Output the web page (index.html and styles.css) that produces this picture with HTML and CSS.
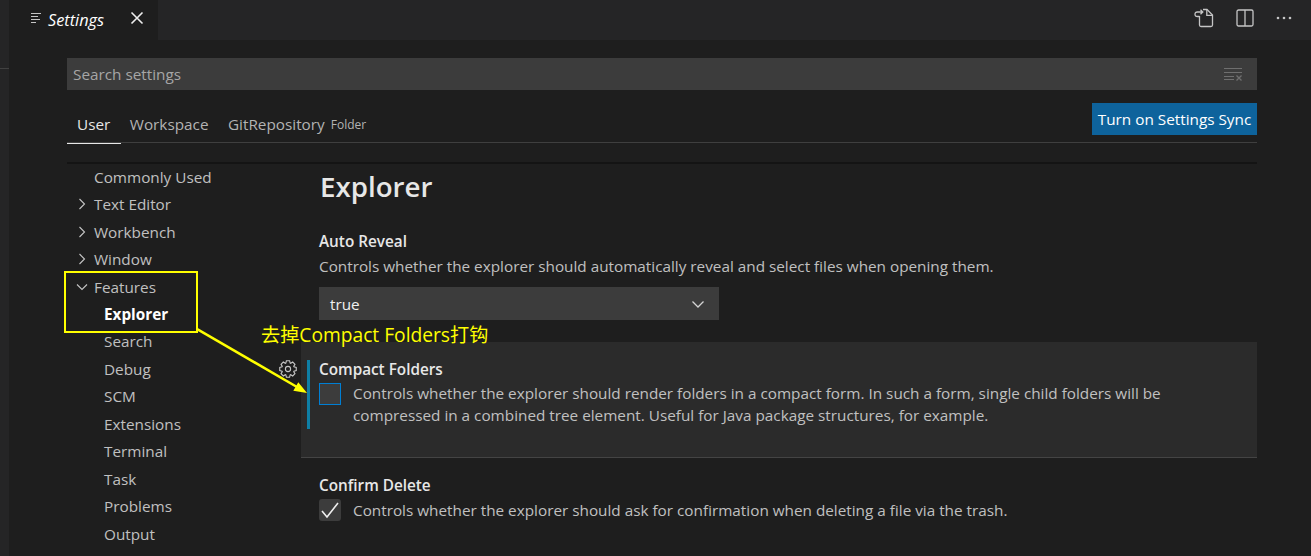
FILE: index.html
```html
<!DOCTYPE html>
<html lang="en">
<head>
    <meta charset="UTF-8">
    <title>Settings</title>
    <link rel="stylesheet" href="styles.css">
</head>
<body>
    <div class="sidebar-edge"><div class="sidebar-line"></div></div>

    <div class="editor">
        <div class="tabbar">
            <div class="tab">
                <svg class="tab-icon" width="12" height="12" viewBox="0 0 12 12" fill="none" stroke="#c5c5c5" stroke-width="1">
                    <path d="M1 1.500h10M1 4.500h7M1 7.500h9M1 10.500h5"/>
                </svg>
                <span class="tab-title">Settings</span>
                <svg class="tab-close" width="14" height="14" viewBox="0 0 14 14" fill="none" stroke="#eeeeee" stroke-width="1.600">
                    <path d="M1.500 1.500l11 11M12.500 1.500l-11 11"/>
                </svg>
            </div>
            <div class="actions">
                <svg width="20" height="20" viewBox="0 0 20 20" fill="none" stroke="#c5c5c5" stroke-width="1.300">
                    <path d="M5.500 8v9q0 1.500 1.500 1.500h10q1.500 0 1.500-1.500V7L13 1.500H9"/>
                    <path d="M12.800 1.500v5.800h5.700"/>
                    <path d="M5.500 8.500H3.500Q1 8.500 1 6.200T3.500 4H8.500M6.500 1.800L8.800 4 6.500 6.200"/>
                </svg>
                <svg width="18" height="18" viewBox="0 0 18 18" fill="none" stroke="#c5c5c5" stroke-width="1.300">
                    <rect x="1" y="1" width="16" height="16" rx="1.500"/>
                    <path d="M9 1v16"/>
                </svg>
                <svg width="16" height="16" viewBox="0 0 16 16" fill="#c5c5c5">
                    <circle cx="2" cy="8" r="1.300"/>
                    <circle cx="8" cy="8" r="1.300"/>
                    <circle cx="14" cy="8" r="1.300"/>
                </svg>
            </div>
        </div>

        <div class="settings">
            <div class="search">
                <span class="search-text">Search settings</span>
                <svg width="20" height="14" viewBox="0 0 20 14" fill="none" stroke="#6f6f6f" stroke-width="1">
                    <path d="M1 1.500h18M1 5.500h18M1 9.500h10M1 12.500h10"/>
                    <path d="M13.500 8.500l5 5M18.500 8.500l-5 5" stroke-width="1.300"/>
                </svg>
            </div>

            <div class="scope-row">
                <div class="scope active">User</div>
                <div class="scope">Workspace</div>
                <div class="scope">GitRepository <span class="scope-small">Folder</span></div>
                <button class="sync-btn">Turn on Settings Sync</button>
            </div>

            <div class="body">
                <div class="tree">
                    <div class="tree-item plain">Commonly Used</div>
                    <div class="tree-item"><svg class="chev" viewBox="0 0 12 12"><path d="M3.500 1l5 5-5 5"/></svg>Text Editor</div>
                    <div class="tree-item"><svg class="chev" viewBox="0 0 12 12"><path d="M3.500 1l5 5-5 5"/></svg>Workbench</div>
                    <div class="tree-item"><svg class="chev" viewBox="0 0 12 12"><path d="M3.500 1l5 5-5 5"/></svg>Window</div>
                    <div class="tree-item"><svg class="chev" viewBox="0 0 12 12"><path d="M1 3.500l5 5 5-5"/></svg>Features</div>
                    <div class="tree-item child selected">Explorer</div>
                    <div class="tree-item child">Search</div>
                    <div class="tree-item child">Debug</div>
                    <div class="tree-item child">SCM</div>
                    <div class="tree-item child">Extensions</div>
                    <div class="tree-item child">Terminal</div>
                    <div class="tree-item child">Task</div>
                    <div class="tree-item child">Problems</div>
                    <div class="tree-item child">Output</div>
                </div>

                <div class="content">
                    <h1>Explorer</h1>

                    <div class="setting">
                        <div class="setting-title">Auto Reveal</div>
                        <div class="setting-desc first">Controls whether the explorer should automatically reveal and select files when opening them.</div>
                        <div class="select">
                            <span>true</span>
                            <svg width="14" height="14" viewBox="0 0 14 14" fill="none" stroke="#d4d4d4" stroke-width="1.300"><path d="M1.500 4.500L7 10l5.500-5.500"/></svg>
                        </div>
                    </div>

                    <div class="setting focused">
                        <svg class="gear" width="18" height="18" viewBox="0 0 18 18" fill="none" stroke="#c5c5c5" stroke-width="1.100">
                            <polygon points="6.850,3.080 7.400,.75 10.600,.75 11.150,3.080 11.660,3.290 13.700,2.040 15.960,4.300 14.710,6.340 14.920,6.850 17.250,7.400 17.250,10.600 14.920,11.150 14.710,11.660 15.960,13.700 13.700,15.960 11.660,14.710 11.150,14.920 10.600,17.250 7.400,17.250 6.850,14.920 6.340,14.710 4.300,15.960 2.040,13.700 3.290,11.660 3.080,11.150 .75,10.600 .75,7.400 3.080,6.850 3.290,6.340 2.040,4.300 4.300,2.040 6.340,3.290"/>
                            <circle cx="9" cy="9" r="2.600"/>
                        </svg>
                        <div class="focus-bar">
                            <div class="setting-title">Compact Folders</div>
                            <div class="check-row">
                                <div class="checkbox empty"></div>
                                <div class="setting-desc">Controls whether the explorer should render folders in a compact form. In such a form, single child folders will be compressed in a combined tree element. Useful for Java package structures, for example.</div>
                            </div>
                        </div>
                    </div>

                    <div class="setting last">
                        <div class="setting-title">Confirm Delete</div>
                        <div class="check-row">
                            <div class="checkbox">
                                <svg width="20" height="20" viewBox="0 0 20 20" fill="none" stroke="#eeeeee" stroke-width="1.600"><path d="M2 11l5 6L18 3"/></svg>
                            </div>
                            <div class="setting-desc">Controls whether the explorer should ask for confirmation when deleting a file via the trash.</div>
                        </div>
                    </div>
                </div>
            </div>
        </div>
    </div>

    <!-- annotation drawn over the screenshot -->
    <div class="mark-box"></div>
    <div class="mark-text">去掉Compact Folders打钩</div>
    <svg class="mark-arrow" width="120" height="80" viewBox="0 0 120 80" fill="#ffff00" stroke="none">
        <path d="M0 1L100 59" stroke="#ffff00" stroke-width="2.500" fill="none"/>
        <path d="M110 65L96.300 62.800l5-8.600z"/>
    </svg>
</body>
</html>
```

FILE: styles.css
```css
* {
    box-sizing: border-box;
}
html, body {
    height: 100%;
}
body {
    margin: 0;
    display: flex;
    overflow: hidden;
    background-color: #1e1e1e;
    color: #cccccc;
    font-family: "Open Sans", "Noto Sans CJK SC", sans-serif;
    font-size: 15.300px;
}
.sidebar-edge {
    width: 9px;
    flex-shrink: 0;
    background-color: #252526;
}
.sidebar-line {
    height: 1px;
    margin-top: 68px;
    background-color: #414141;
}
.editor {
    flex: 1;
    min-width: 0;
}
.tabbar {
    height: 40px;
    display: flex;
    justify-content: space-between;
    background-color: #252526;
}
.tab {
    width: 149px;
    display: flex;
    align-items: center;
    background-color: #1e1e1e;
    padding: 0 0 4px 21px;
}
.tab-title {
    margin: 3px 0 0 6px;
    font-size: 16.300px;
    font-style: italic;
    color: #ffffff;
}
.tab-close {
    margin-left: 26px;
}
.actions {
    display: flex;
    align-items: center;
    gap: 22px;
    padding: 0 19px 4px 0;
}
.settings {
    padding: 18px 54px 0 58px;
}
.search {
    height: 32px;
    display: flex;
    align-items: center;
    justify-content: space-between;
    padding: 0 14px 0 6px;
    background-color: #3c3c3c;
}
.search-text {
    color: #a6a6a6;
}
.scope-row {
    height: 40px;
    margin-top: 13px;
    display: flex;
    align-items: center;
    border-bottom: 1px solid #3f3f3f;
    position: relative;
}
.scope {
    height: 40px;
    line-height: 42px;
    padding: 0 11px;
    margin-right: -2.500px;
    color: #b3b3b3;
    white-space: nowrap;
}
.scope.active {
    padding-left: 10px;
    color: #e7e7e7;
    border-bottom: 1px solid #e7e7e7;
    margin-bottom: -1px;
    height: 41px;
}
.scope-small {
    font-size: 12px;
    position: relative;
    top: -1px;
    margin-left: 2px;
}
.sync-btn {
    margin-left: auto;
    margin-top: -8px;
    height: 32px;
    width: 165px;
    padding: 0;
    border: none;
    background-color: #0e639c;
    color: #ffffff;
    font-family: inherit;
    font-size: 15.300px;
}
.body {
    display: flex;
    margin-top: 19px;
    border-top: 2px solid #141414;
}
.tree {
    width: 234px;
    flex-shrink: 0;
    margin-top: -1px;
}
.tree-item {
    height: 27.460px;
    display: flex;
    align-items: center;
    padding-left: 9px;
    white-space: nowrap;
    color: #c0c0c0;
}
.tree-item.plain {
    padding-left: 27px;
}
.tree-item.child {
    padding-left: 37px;
}
.tree-item.selected {
    font-weight: 700;
    color: #ffffff;
}
.chev {
    width: 12px;
    height: 12px;
    margin-right: 6px;
    fill: none;
    stroke: #c5c5c5;
    stroke-width: 1.100;
}
.content {
    flex: 1;
    min-width: 0;
}
h1 {
    margin: 0;
    padding: 3px 0 0 19px;
    height: 52px;
    font-size: 27.700px;
    font-weight: 600;
    color: #e7e7e7;
}
.setting {
    padding: 0 18px;
    position: relative;
    margin-top: 15px;
}
.setting-title {
    font-weight: 600;
    color: #e7e7e7;
    line-height: 22px;
    margin: -1px 0 3px;
}
.setting-desc {
    color: #c0c0c0;
    line-height: 22px;
}
.setting-desc.first {
    margin-top: 1px;
}
.select {
    width: 400px;
    height: 33px;
    margin-top: 10px;
    padding: 0 14px 0 11px;
    display: flex;
    align-items: center;
    justify-content: space-between;
    background-color: #3c3c3c;
    color: #f0f0f0;
}
.setting.focused {
    margin-top: 22px;
    padding: 18px 30px 28px 6px;
    height: 116px;
    background-color: #2b2b2b;
    border-bottom: 1px solid #444444;
}
.focus-bar {
    display: flow-root;
    border-left: 3px solid #0e7fa6;
    padding-left: 9px;
    height: 69px;
}
.focus-bar .setting-title {
    margin: -2px 0 3px;
}
.focus-bar .setting-desc {
    margin-top: -1px;
}
.gear {
    position: absolute;
    left: -22px;
    top: 18px;
}
.check-row {
    display: flex;
    align-items: flex-start;
    gap: 12px;
}
.checkbox {
    width: 22px;
    height: 22px;
    flex-shrink: 0;
    display: flex;
    align-items: center;
    justify-content: center;
    background-color: #3c3c3c;
    border-radius: 3px;
}
.checkbox.empty {
    border: 1px solid #007fd4;
    border-radius: 0;
}
.setting.last {
    margin-top: 17px;
}
.mark-box {
    position: absolute;
    left: 64px;
    top: 271px;
    width: 134px;
    height: 62px;
    border: 2px solid #ffff00;
}
.mark-text {
    position: absolute;
    left: 261px;
    top: 323px;
    font-size: 19.200px;
    line-height: 24px;
    color: #ffff00;
    white-space: nowrap;
}
.mark-arrow {
    position: absolute;
    left: 197px;
    top: 328px;
}
```
